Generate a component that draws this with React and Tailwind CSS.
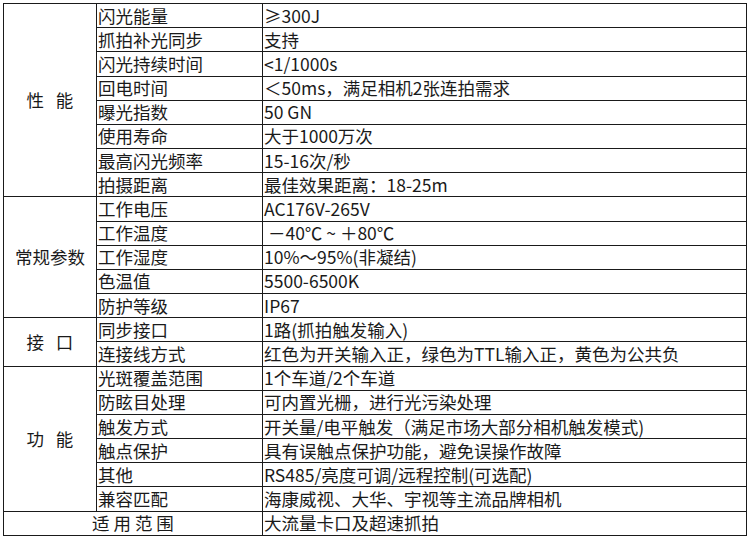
const GROUPS = [
  {
    label: '性\u00a0\u00a0\u00a0能',
    rows: [
      ['闪光能量', '≥300J'],
      ['抓拍补光同步', '支持'],
      ['闪光持续时间', '<1/1000s'],
      ['回电时间', '＜50ms，满足相机2张连拍需求'],
      ['曝光指数', '50 GN'],
      ['使用寿命', '大于1000万次'],
      ['最高闪光频率', '15-16次/秒'],
      ['拍摄距离', '最佳效果距离：18-25m'],
    ],
  },
  {
    label: '常规参数',
    rows: [
      ['工作电压', 'AC176V-265V'],
      ['工作温度', '\u00a0－40℃ ~ ＋80℃'],
      ['工作湿度', '10%～95%(非凝结)'],
      ['色温值', '5500-6500K'],
      ['防护等级', 'IP67'],
    ],
  },
  {
    label: '接\u00a0\u00a0\u00a0口',
    rows: [
      ['同步接口', '1路(抓拍触发输入)'],
      ['连接线方式', '红色为开关输入正，绿色为TTL输入正，黄色为公共负'],
    ],
  },
  {
    label: '功\u00a0\u00a0\u00a0能',
    rows: [
      ['光斑覆盖范围', '1个车道/2个车道'],
      ['防眩目处理', '可内置光栅，进行光污染处理'],
      ['触发方式', '开关量/电平触发（满足市场大部分相机触发模式)'],
      ['触点保护', '具有误触点保护功能，避免误操作故障'],
      ['其他', 'RS485/亮度可调/远程控制(可选配)'],
      ['兼容匹配', '海康威视、大华、宇视等主流品牌相机'],
    ],
  },
]

const CELL = 'border border-[#1a1a1a] p-0 leading-[20px] whitespace-nowrap'

export default function App() {
  return (
    <div className="w-[751px] h-[538px] bg-white pt-[3px] pl-[3px]" style={{ fontFamily: '"Noto Sans CJK SC", "Noto Sans", sans-serif' }}>
      <table className="border-collapse table-fixed w-[743px] h-[533px] text-[17.5px] text-[#1a1a1a]">
        <colgroup>
          <col className="w-[93px]" />
          <col className="w-[166px]" />
          <col className="w-[484px]" />
        </colgroup>
        <tbody>
          {GROUPS.map(g =>
            g.rows.map((r, i) => (
              <tr key={r[0]}>
                {i === 0 && (
                  <td rowSpan={g.rows.length} className={CELL + ' text-center align-middle'}>
                    {g.label}
                  </td>
                )}
                <td className={CELL + ' pl-px'}>{r[0]}</td>
                <td className={CELL + ' pl-px'}>{r[1]}</td>
              </tr>
            ))
          )}
          <tr>
            <td colSpan={2} className={CELL + ' text-center'}>适 用 范 围</td>
            <td className={CELL + ' pl-px'}>大流量卡口及超速抓拍</td>
          </tr>
        </tbody>
      </table>
    </div>
  )
}
